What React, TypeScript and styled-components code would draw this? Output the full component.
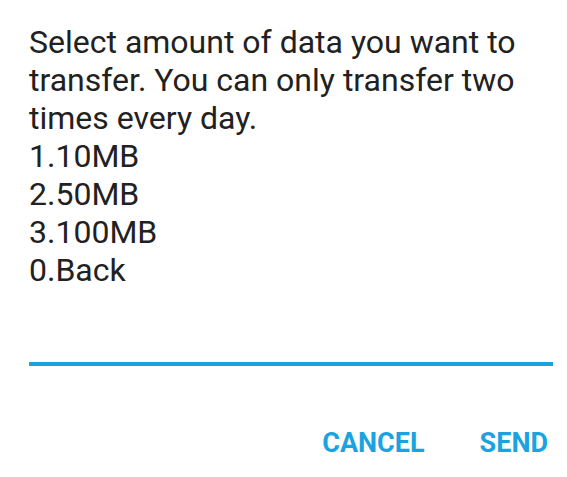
import styled, { createGlobalStyle } from 'styled-components';

const GlobalStyle = createGlobalStyle`
  html, body {
    margin: 0;
    padding: 0;
    background: #ffffff;
  }
`;

const options = ['1.10MB', '2.50MB', '3.100MB', '0.Back'];

export default function App() {
  return (
    <>
      <GlobalStyle />
      <Dialog>
        <Message>
          Select amount of data you want to transfer. You can only transfer two
          times every day.
          {options.map((o) => (
            <Option key={o}>{o}</Option>
          ))}
        </Message>
        <Input type="text" />
        <Actions>
          <ActionButton>CANCEL</ActionButton>
          <ActionButton>SEND</ActionButton>
        </Actions>
      </Dialog>
    </>
  );
}

const Dialog = styled.div`
  width: 567px;
  height: 477px;
  box-sizing: border-box;
  padding: 23px 14px 0 29px;
  display: flex;
  flex-direction: column;
  font-family: Roboto, 'Noto Sans', sans-serif;
`;

const Message = styled.div`
  font-size: 32px;
  line-height: 38px;
  color: #212121;
`;

const Option = styled.div``;

const Input = styled.input`
  margin-top: 33px;
  height: 40px;
  border: none;
  border-bottom: 4px solid #1ba3e1;
  outline: none;
  background: transparent;
  padding: 0;
  font-size: 28px;
  width: 524px;
`;

const Actions = styled.div`
  display: flex;
  justify-content: flex-end;
  gap: 55px;
  margin-top: 61px;
  padding-right: 5px;
`;

const ActionButton = styled.button`
  border: none;
  background: none;
  padding: 0;
  font-family: Roboto, sans-serif;
  font-weight: 700;
  font-size: 27px;
  color: #1ba3e1;
`;
